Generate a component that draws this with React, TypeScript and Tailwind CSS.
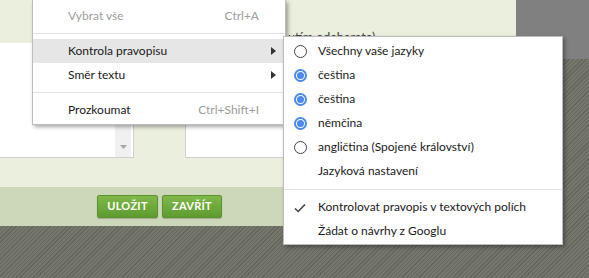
import React from 'react'

const font = { fontFamily: 'Lato, "Noto Sans", sans-serif' }

function Arrow() {
	return (
		<svg width="5" height="8" viewBox="0 0 5 8" className="absolute right-[9px] top-[8px]">
			<path d="M0 0 L5 4 L0 8 Z" fill="#333" />
		</svg>
	)
}

function Radio({ checked }: { checked: boolean }) {
	if (checked) {
		return (
			<span className="absolute left-[10px] top-[6px] w-[13px] h-[13px] rounded-full border-2 border-[#4a89f0] flex items-center justify-center">
				<span className="w-[7px] h-[7px] rounded-full bg-[#4a89f0]" />
			</span>
		)
	}
	return <span className="absolute left-[10px] top-[6px] w-[13px] h-[13px] rounded-full border-[1.5px] border-[#444]" />
}

function Check() {
	return (
		<svg width="12" height="10" viewBox="0 0 12 10" className="absolute left-[10px] top-[8px]">
			<path d="M1 5.5 L4.2 8.5 L11 1.5" stroke="#444" strokeWidth="1.6" fill="none" />
		</svg>
	)
}

function MenuRow({ label, shortcut, disabled, active, arrow }: { label: string; shortcut?: string; disabled?: boolean; active?: boolean; arrow?: boolean }) {
	return (
		<div className={`relative h-[24px] flex items-center pl-[35px] pr-[26px] text-[12px] ${active ? 'bg-[#e6e6e6]' : ''} ${disabled ? 'text-[#9c9c9c]' : 'text-[#1a1a1a]'}`}>
			<span className="flex-1">{label}</span>
			{shortcut && <span className="text-[#9c9c9c]">{shortcut}</span>}
			{arrow && <Arrow />}
		</div>
	)
}

function SubRow({ label, radio, check }: { label: string; radio?: 'on' | 'off'; check?: boolean }) {
	return (
		<div className="relative h-[24px] flex items-center pl-[34px] text-[12px] text-[#1a1a1a]">
			{radio && <Radio checked={radio === 'on'} />}
			{check && <Check />}
			<span>{label}</span>
		</div>
	)
}

function Separator() {
	return (
		<div className="h-[11px] flex items-center">
			<div className="w-full h-px bg-[#e3e3e3]" />
		</div>
	)
}

export default function App() {
	return (
		<div style={font} className="relative w-[589px] h-[278px] overflow-hidden flex bg-[repeating-linear-gradient(135deg,#65675e_0px,#65675e_1px,#75776d_1px,#75776d_3px)]">
			<div className="w-[516px] h-[226px] flex flex-col bg-[#ebefde]">
				<div className="h-[158px] flex">
					<div className="w-[134px] flex flex-col">
						<div className="h-[43px]" />
						<div className="flex-1 bg-white border-r border-b border-[#cfcfcf] flex justify-end pr-[2px]">
							<div className="w-[16px] bg-[#f0f0f0] flex items-end justify-center pb-[8px]">
								<svg width="7" height="4" viewBox="0 0 7 4">
									<path d="M0 0 L7 0 L3.5 4 Z" fill="#a6a6a6" />
								</svg>
							</div>
						</div>
					</div>
					<div className="w-[51px]" />
					<div className="flex-1 flex flex-col pr-[16px]">
						<div className="h-[43px] pt-[30px] pl-[103px]">
							<div className="h-[6px] overflow-hidden text-[12.5px] leading-[15px] text-[#444] whitespace-nowrap">utím odeberete)</div>
						</div>
						<div className="flex-1 bg-white border-l border-b border-[#cfcfcf]" />
					</div>
				</div>
				<div className="h-[29px]" />
				<div className="h-[39px] bg-[#cdd7b9] flex gap-[4px] pl-[97px] pt-[8px]">
					<button className="w-[61px] h-[23px] rounded-[2px] border border-[#5c9230] bg-gradient-to-b from-[#80b94a] to-[#5e9b2f] text-white text-[11px] font-bold tracking-[0.3px] shadow-[0_1px_1px_rgba(0,0,0,0.2)]">ULOŽIT</button>
					<button className="w-[60px] h-[23px] rounded-[2px] border border-[#5c9230] bg-gradient-to-b from-[#80b94a] to-[#5e9b2f] text-white text-[11px] font-bold tracking-[0.3px] shadow-[0_1px_1px_rgba(0,0,0,0.2)]">ZAVŘÍT</button>
				</div>
			</div>
			<div className="w-[73px] h-[59px] bg-[#808080]" />

			<div className="absolute left-[32px] top-0 w-[254px] h-[125px] bg-white border border-t-0 border-[#bdbdbd] pt-[4px] shadow-[2px_2px_4px_rgba(0,0,0,0.35)]">
				<MenuRow label="Vybrat vše" shortcut="Ctrl+A" disabled />
				<Separator />
				<MenuRow label="Kontrola pravopisu" active arrow />
				<MenuRow label="Směr textu" arrow />
				<Separator />
				<MenuRow label="Prozkoumat" shortcut="Ctrl+Shift+I" />
			</div>

			<div className="absolute left-[283px] top-[36px] w-[280px] h-[209px] bg-white border border-[#bdbdbd] pt-[2px] shadow-[2px_2px_4px_rgba(0,0,0,0.35)]">
				<SubRow label="Všechny vaše jazyky" radio="off" />
				<SubRow label="čeština" radio="on" />
				<SubRow label="čeština" radio="on" />
				<SubRow label="němčina" radio="on" />
				<SubRow label="angličtina (Spojené království)" radio="off" />
				<SubRow label="Jazyková nastavení" />
				<div className="h-[12px] flex items-center">
					<div className="w-full h-px bg-[#e3e3e3]" />
				</div>
				<SubRow label="Kontrolovat pravopis v textových polích" check />
				<SubRow label="Žádat o návrhy z Googlu" />
			</div>
		</div>
	)
}
